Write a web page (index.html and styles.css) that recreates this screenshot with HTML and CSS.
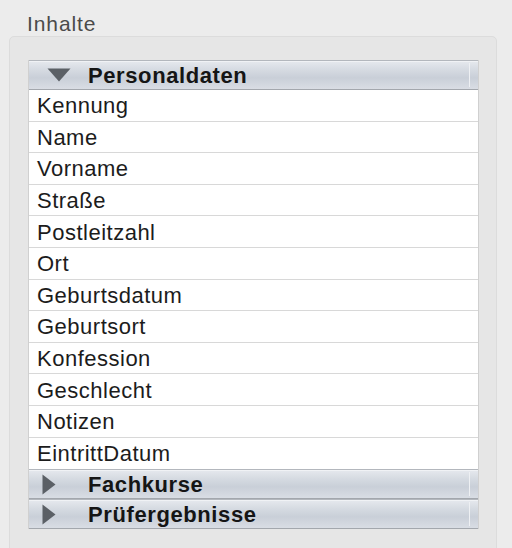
FILE: index.html
```html
<!DOCTYPE html>
<html lang="de">
<head>
<meta charset="utf-8">
<title>Inhalte</title>
<link rel="stylesheet" href="styles.css">
</head>
<body>
<div class="label">Inhalte</div>
<div class="group">
  <div class="outline">
    <div class="section">
      <span class="disclosure">
        <svg width="24" height="14" viewBox="0 0 24 14"><polygon points="0.5,0.5 23.5,0.5 12,13.5" fill="#5b6066"/></svg>
      </span>
      <span class="section-title">Personaldaten</span>
    </div>
    <div class="row">Kennung</div>
    <div class="row">Name</div>
    <div class="row">Vorname</div>
    <div class="row">Straße</div>
    <div class="row">Postleitzahl</div>
    <div class="row">Ort</div>
    <div class="row">Geburtsdatum</div>
    <div class="row">Geburtsort</div>
    <div class="row">Konfession</div>
    <div class="row">Geschlecht</div>
    <div class="row">Notizen</div>
    <div class="row last">EintrittDatum</div>
    <div class="section">
      <span class="disclosure right">
        <svg width="14" height="21" viewBox="0 0 14 21"><polygon points="0.5,0.5 13.5,10.5 0.5,20.5" fill="#5b6066"/></svg>
      </span>
      <span class="section-title">Fachkurse</span>
    </div>
    <div class="section">
      <span class="disclosure right">
        <svg width="14" height="21" viewBox="0 0 14 21"><polygon points="0.5,0.5 13.5,10.5 0.5,20.5" fill="#5b6066"/></svg>
      </span>
      <span class="section-title">Prüfergebnisse</span>
    </div>
  </div>
</div>
</body>
</html>
```

FILE: styles.css
```css
html, body {
  margin: 0;
  padding: 0;
}

body {
  background: #ececec;
  font-family: "Liberation Sans", Arial, sans-serif;
  font-size: 22px;
  color: #1e1e1e;
  width: 512px;
  height: 548px;
  overflow: hidden;
}

.label {
  padding: 12px 0 0 27px;
  height: 24px;
  line-height: 24px;
  font-size: 21px;
  color: #4a4a4a;
  letter-spacing: 0.9px;
}

.group {
  margin: 0 15px 0 9px;
  padding: 23px 17px 30px 18px;
  background: #e6e6e6;
  border: 1px solid #dcdcdc;
  border-radius: 5px;
}

.outline {
  display: flex;
  flex-direction: column;
  background: #ffffff;
  border-left: 1px solid #d0d0d0;
  border-right: 1px solid #d0d0d0;
}

.section {
  box-sizing: border-box;
  height: 30px;
  display: flex;
  align-items: center;
  border-top: 1px solid #b3b7bd;
  border-bottom: 1px solid #a3a7ad;
  background: linear-gradient(#e6e9ee 0%, #d6dbe2 30%, #c9cfd8 60%, #d9dde4 100%);
  box-shadow: inset 0 1px 0 #f0f2f5;
  position: relative;
}

.section::after {
  content: "";
  position: absolute;
  right: 8px;
  top: 2px;
  bottom: 2px;
  width: 1px;
  background: #eef0f3;
}

.disclosure {
  width: 59px;
  display: flex;
  justify-content: center;
  align-items: center;
  flex: none;
}

.disclosure.right {
  justify-content: flex-start;
  padding-left: 13px;
  width: 46px;
}

.section-title {
  font-weight: bold;
  color: #151515;
  letter-spacing: 0.6px;
  padding-top: 1px;
}

.row {
  box-sizing: border-box;
  height: 31.6px;
  display: flex;
  align-items: center;
  padding: 2px 0 0 8px;
  border-bottom: 1px solid #d8d8d8;
  letter-spacing: 0.5px;
  color: #1c1c1c;
}

.row.last {
  border-bottom: none;
}
```
